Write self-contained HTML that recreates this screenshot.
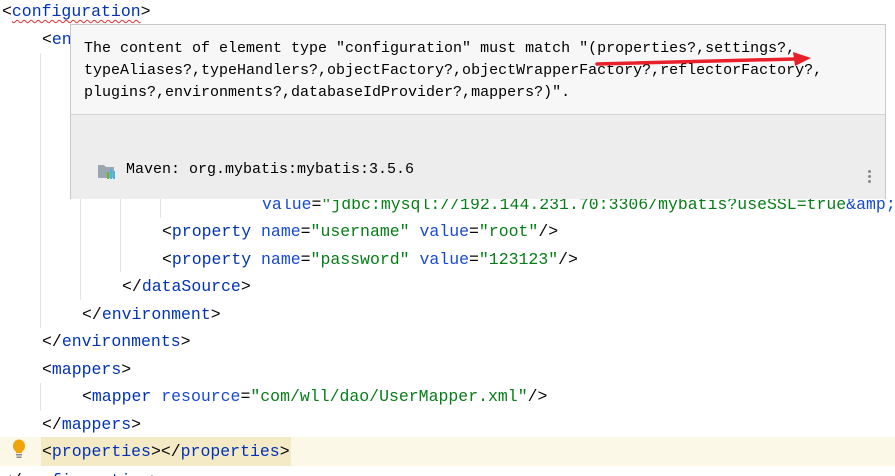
<!DOCTYPE html>
<html><head><meta charset="utf-8"><style>
html,body{margin:0;width:895px;height:476px;overflow:hidden;}
body{background:#fff;position:relative;font-family:"Liberation Mono",monospace;}
.l{position:absolute;left:2px;height:27.5px;line-height:27.5px;font-size:16.5px;white-space:pre;color:#080808;}
.t{color:#0033b3}.a{color:#174ad4}.v{color:#067d17}
.g{position:absolute;width:1px;background:#e4e4e4}
#pop{position:absolute;left:70px;top:24px;width:814px;height:173px;border:1px solid #c8c8c8;background:#f7f7f7;}
#pop .tx{position:absolute;left:13px;top:13px;font-size:15px;line-height:22px;color:#000;white-space:pre;}
#foot{position:absolute;left:0;top:89px;width:814px;height:84px;background:#ededed;border-top:1px solid #d4d4d4;}
</style></head><body>
<div class="g" style="left:40px;top:53px;height:275px"></div>
<div class="g" style="left:40px;top:383px;height:28px"></div>
<div class="g" style="left:80px;top:195px;height:105px"></div>
<div class="g" style="left:120px;top:195px;height:77px"></div>
<div class="g" style="left:160px;top:195px;height:23px"></div>
<div style="position:absolute;left:0;top:437px;width:895px;height:29px;background:#fcf8e8"></div>
<div style="position:absolute;left:41px;top:437px;width:250px;height:29px;background:#f5eac6"></div>
<div class="l" style="top:-2px">&lt;<span class="t" style="text-decoration:underline wavy #e03030;text-decoration-thickness:1px;text-underline-offset:3px">configuration</span>&gt;</div>
<div class="l" style="top:25.5px;left:42px">&lt;<span class="t">environments</span></div>
<div class="l" style="top:190.5px;left:262px"><span class="a">value</span>=<span class="v">"jdbc:mysql://192.144.231.70:3306/mybatis?useSSL=true</span><span class="a">&amp;amp;</span></div>
<div class="l" style="top:218px;left:162px">&lt;<span class="t">property</span> <span class="a">name</span>=<span class="v">"username"</span> <span class="a">value</span>=<span class="v">"root"</span>/&gt;</div>
<div class="l" style="top:245.5px;left:162px">&lt;<span class="t">property</span> <span class="a">name</span>=<span class="v">"password"</span> <span class="a">value</span>=<span class="v">"123123"</span>/&gt;</div>
<div class="l" style="top:273px;left:122px">&lt;/<span class="t">dataSource</span>&gt;</div>
<div class="l" style="top:300.5px;left:82px">&lt;/<span class="t">environment</span>&gt;</div>
<div class="l" style="top:328px;left:42px">&lt;/<span class="t">environments</span>&gt;</div>
<div class="l" style="top:355.5px;left:42px">&lt;<span class="t">mappers</span>&gt;</div>
<div class="l" style="top:383px;left:82px">&lt;<span class="t">mapper</span> <span class="a">resource</span>=<span class="v">"com/wll/dao/UserMapper.xml"</span>/&gt;</div>
<div class="l" style="top:410.5px;left:42px">&lt;/<span class="t">mappers</span>&gt;</div>
<div class="l" style="top:438px;left:42px">&lt;<span class="t">properties</span>&gt;&lt;/<span class="t">properties</span>&gt;</div>
<div class="l" style="top:467px;left:2px">&lt;/<span class="t">configuration</span>&gt;</div>
<svg style="position:absolute;left:10px;top:439px" width="18" height="22"><ellipse cx="9" cy="7" rx="6" ry="6.5" fill="#f0a30a"/><rect x="6" y="11" width="6" height="3" fill="#f0a30a"/><rect x="6" y="15" width="6" height="1.5" fill="#888"/><rect x="6.5" y="17.5" width="5" height="1.5" fill="#888"/></svg>
<div id="pop">
<div class="tx">The content of element type "configuration" must match "(properties?,settings?,
typeAliases?,typeHandlers?,objectFactory?,objectWrapperFactory?,reflectorFactory?,
plugins?,environments?,databaseIdProvider?,mappers?)".</div>
<div id="foot">
<svg style="position:absolute;left:26px;top:47px" width="20" height="18"><path d="M1 3h6l2 2h8v11H1z" fill="#9aa7b0"/><rect x="10" y="10" width="2" height="7" fill="#5fb832"/><rect x="13" y="7" width="2" height="10" fill="#40b6e0"/><rect x="16" y="9" width="2" height="8" fill="#40b6e0"/></svg>
<div style="position:absolute;left:55px;top:44px;font-size:15px;line-height:22px;color:#000;white-space:pre">Maven: org.mybatis:mybatis:3.5.6</div>
<div style="position:absolute;left:797px;top:55px;width:3px">
<div style="width:3px;height:3px;border-radius:2px;background:#888;margin-bottom:2px"></div>
<div style="width:3px;height:3px;border-radius:2px;background:#888;margin-bottom:2px"></div>
<div style="width:3px;height:3px;border-radius:2px;background:#888"></div></div>
</div>
</div>
<svg style="position:absolute;left:0;top:0" width="895" height="476"><path d="M597 64 L795 59" stroke="#e8202a" stroke-width="3.5" fill="none" stroke-linecap="round"/><path d="M793 52 L811 58 L795 66 Z" fill="#e8202a"/></svg>
</body></html>
